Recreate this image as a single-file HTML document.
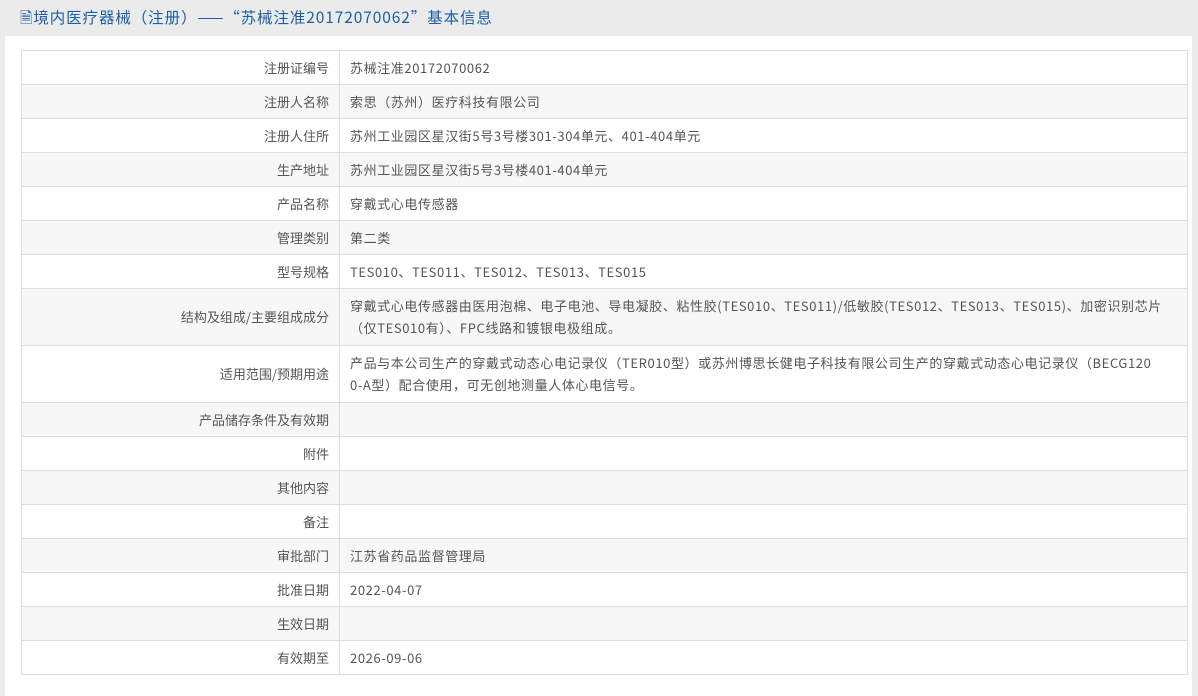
<!DOCTYPE html>
<html><head><meta charset="utf-8"><style>
body{margin:0;background:#ebebeb;font-family:"Noto Sans CJK SC","Liberation Sans",sans-serif;width:1198px;height:675px;overflow:hidden}
.hd{height:36px;line-height:35px;padding-left:20px;color:#1d5fa6;font-size:15.5px;letter-spacing:0.9px}
.panel{position:absolute;left:5px;top:36px;width:1187px;height:660px;background:#fff}
table{position:absolute;left:21px;top:50px;width:1167px;border-collapse:collapse;font-size:13px;color:#555}
td{border:1px solid #ddd;height:33px;padding:0 10px;line-height:22px;white-space:nowrap}
td:last-child{letter-spacing:0.6px}
td.l{width:297px;text-align:right}
tr:nth-child(even) td{background:#f7f7f7}
tr.m td{height:56px}
</style></head><body>
<div class="hd">🗎境内医疗器械（注册）——“苏械注准20172070062”基本信息</div>
<div class="panel"></div>
<table>
<tr><td class="l">注册证编号</td><td>苏械注准20172070062</td></tr>
<tr><td class="l">注册人名称</td><td>索思（苏州）医疗科技有限公司</td></tr>
<tr><td class="l">注册人住所</td><td>苏州工业园区星汉街5号3号楼301-304单元、401-404单元</td></tr>
<tr><td class="l">生产地址</td><td>苏州工业园区星汉街5号3号楼401-404单元</td></tr>
<tr><td class="l">产品名称</td><td>穿戴式心电传感器</td></tr>
<tr><td class="l">管理类别</td><td>第二类</td></tr>
<tr><td class="l">型号规格</td><td>TES010、TES011、TES012、TES013、TES015</td></tr>
<tr class="m"><td class="l">结构及组成/主要组成成分</td><td>穿戴式心电传感器由医用泡棉、电子电池、导电凝胶、粘性胶(TES010、TES011)/低敏胶(TES012、TES013、TES015)、加密识别芯片<br>（仅TES010有）、FPC线路和镀银电极组成。</td></tr>
<tr class="m"><td class="l">适用范围/预期用途</td><td>产品与本公司生产的穿戴式动态心电记录仪（TER010型）或苏州博思长健电子科技有限公司生产的穿戴式动态心电记录仪（BECG120<br>0-A型）配合使用，可无创地测量人体心电信号。</td></tr>
<tr><td class="l">产品储存条件及有效期</td><td></td></tr>
<tr><td class="l">附件</td><td></td></tr>
<tr><td class="l">其他内容</td><td></td></tr>
<tr><td class="l">备注</td><td></td></tr>
<tr><td class="l">审批部门</td><td>江苏省药品监督管理局</td></tr>
<tr><td class="l">批准日期</td><td>2022-04-07</td></tr>
<tr><td class="l">生效日期</td><td></td></tr>
<tr><td class="l">有效期至</td><td>2026-09-06</td></tr>
</table>
</body></html>
